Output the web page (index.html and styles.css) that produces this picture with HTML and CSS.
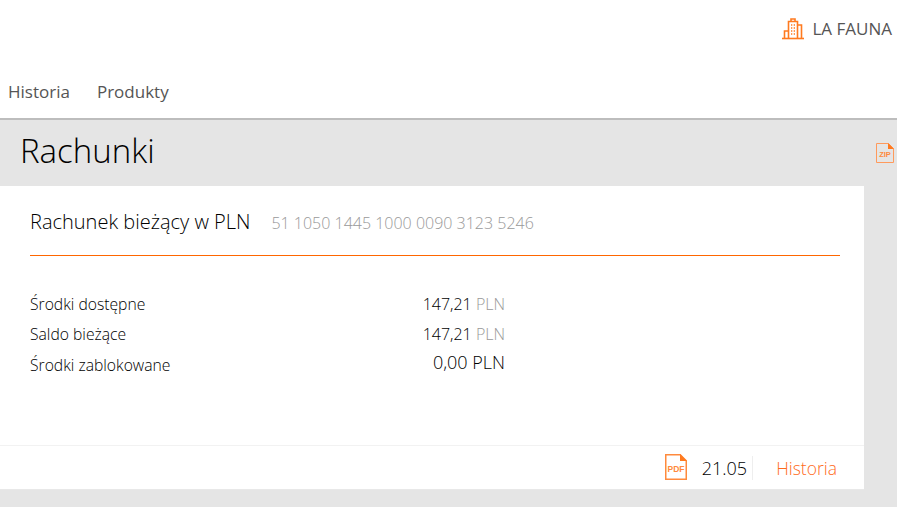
FILE: index.html

```html
<!DOCTYPE html>
<html lang="pl">
<head>
  <meta charset="UTF-8" />
  <title>Rachunki</title>
  <link rel="stylesheet" href="styles.css">
</head>
<body>
  <header class="top">
    <svg class="firm-icon" width="22" height="22" viewBox="0 0 22 22" fill="none" stroke="#ff7a1f" stroke-width="1.6">
      <path d="M0 20.5h22"/>
      <path d="M2.5 20v-7h4"/>
      <path d="M6.5 20V3.5h9V20"/>
      <path d="M9 3.5V1h4v2.5"/>
      <path d="M15.5 7h4v13"/>
      <path d="M9 7h1.3M11.7 7H13M9 10h1.3M11.7 10H13M9 13h1.3M11.7 13H13M9 16h1.3M11.7 16H13"/>
    </svg>
    <span class="firm-name">LA FAUNA</span>
  </header>
  <nav class="menu">
    <a>Historia</a>
    <a>Produkty</a>
  </nav>
  <main class="content">
    <div class="title-row">
      <h1>Rachunki</h1>
      <svg class="zip-icon" width="18" height="20" viewBox="0 0 18 20" fill="none">
        <path d="M.5.5h12l5 5v14H.5z" stroke="#ff9a5c"/>
        <path d="M12 0l6 6h-6z" fill="#ff7a1f"/>
        <text x="9" y="14" text-anchor="middle" class="icon-label">ZIP</text>
      </svg>
    </div>
    <section class="card">
      <div class="card-body">
        <div class="card-head">
          <h2>Rachunek bieżący w PLN</h2>
          <span class="number">51 1050 1445 1000 0090 3123 5246</span>
        </div>
        <div class="rows">
          <div class="row"><span class="label">Środki dostępne</span><span class="value">147,21 <em>PLN</em></span></div>
          <div class="row"><span class="label">Saldo bieżące</span><span class="value">147,21 <em>PLN</em></span></div>
          <div class="row big"><span class="label">Środki zablokowane</span><span class="value">0,00 PLN</span></div>
        </div>
      </div>
      <div class="card-foot">
        <svg class="pdf-icon" width="22" height="26" viewBox="0 0 22 26" fill="none">
          <path d="M.75.75h14.5l6 6v18.5H.75z" stroke="#ff8a3d" stroke-width="1.5"/>
          <path d="M15 0l7 7h-7z" fill="#ff7a1f"/>
          <text x="11" y="18" text-anchor="middle" class="icon-label pdf-label">PDF</text>
        </svg>
        <span class="date">21.05</span>
        <a class="history">Historia</a>
      </div>
    </section>
  </main>
</body>
</html>
```

FILE: styles.css

```css
* {
  box-sizing: border-box;
}
body {
  margin: 0;
  height: 507px;
  overflow: hidden;
  background: #e5e5e5;
  font-family: "Open Sans", "Liberation Sans", sans-serif;
  font-weight: 300;
  color: #111;
}
.top {
  height: 70px;
  background: #fff;
  display: flex;
  justify-content: flex-end;
  align-items: center;
  padding: 0 5px 13px 0;
  gap: 8px;
}
.firm-name {
  font-size: 17px;
  font-weight: 400;
  color: #555;
}
.menu {
  height: 50px;
  background: #fff;
  border-bottom: 2px solid #bdbdbd;
  display: flex;
  align-items: center;
  gap: 27px;
  padding: 0 8px 6px;
  font-size: 17px;
  font-weight: 400;
  color: #555;
}
.title-row {
  height: 66px;
  display: flex;
  justify-content: space-between;
  align-items: center;
  padding: 0 3px 0 20px;
}
h1 {
  margin: 0 0 6px;
  font-size: 33px;
  font-weight: 300;
  color: #000;
}
.icon-label {
  font-family: "Liberation Sans", sans-serif;
  font-size: 7.5px;
  font-weight: 700;
  fill: #ff8a3d;
}
.pdf-label {
  font-size: 8.5px;
}
.card {
  width: 864px;
  height: 304px;
  background: #fff;
  display: flex;
  flex-direction: column;
}
.card-body {
  flex: 1;
  padding: 0 24px 0 30px;
}
.card-head {
  height: 70px;
  border-bottom: 1px solid #ff6600;
  display: flex;
  align-items: baseline;
  gap: 21px;
  padding-top: 22px;
}
h2 {
  margin: 0;
  font-size: 20px;
  font-weight: 300;
  color: #000;
}
.number {
  font-size: 16px;
  font-weight: 300;
  color: #999;
}
.rows {
  padding-top: 37px;
}
.row {
  display: flex;
  width: 475px;
  justify-content: space-between;
  align-items: baseline;
  height: 30px;
  font-size: 16px;
  color: #000;
}
.label {
  font-size: 15.7px;
}
.value em {
  font-style: normal;
  color: #999;
}
.big {
  align-items: flex-start;
}
.big .label {
  padding-top: 1px;
}
.big .value {
  font-size: 18px;
  line-height: 18px;
}
.card-foot {
  height: 45px;
  border-top: 1px solid #f2f2f2;
  border-bottom: 1px solid #e8e8e8;
  display: flex;
  align-items: center;
  justify-content: flex-end;
  padding-right: 27px;
}
.pdf-icon {
  margin-bottom: 1px;
}
.date {
  font-size: 18px;
  color: #000;
  margin-left: 15px;
  padding-right: 5px;
  border-right: 1px solid #eee;
}
.history {
  font-size: 17.5px;
  font-weight: 300;
  color: #ff6a1a;
  margin-left: 23px;
}
```
